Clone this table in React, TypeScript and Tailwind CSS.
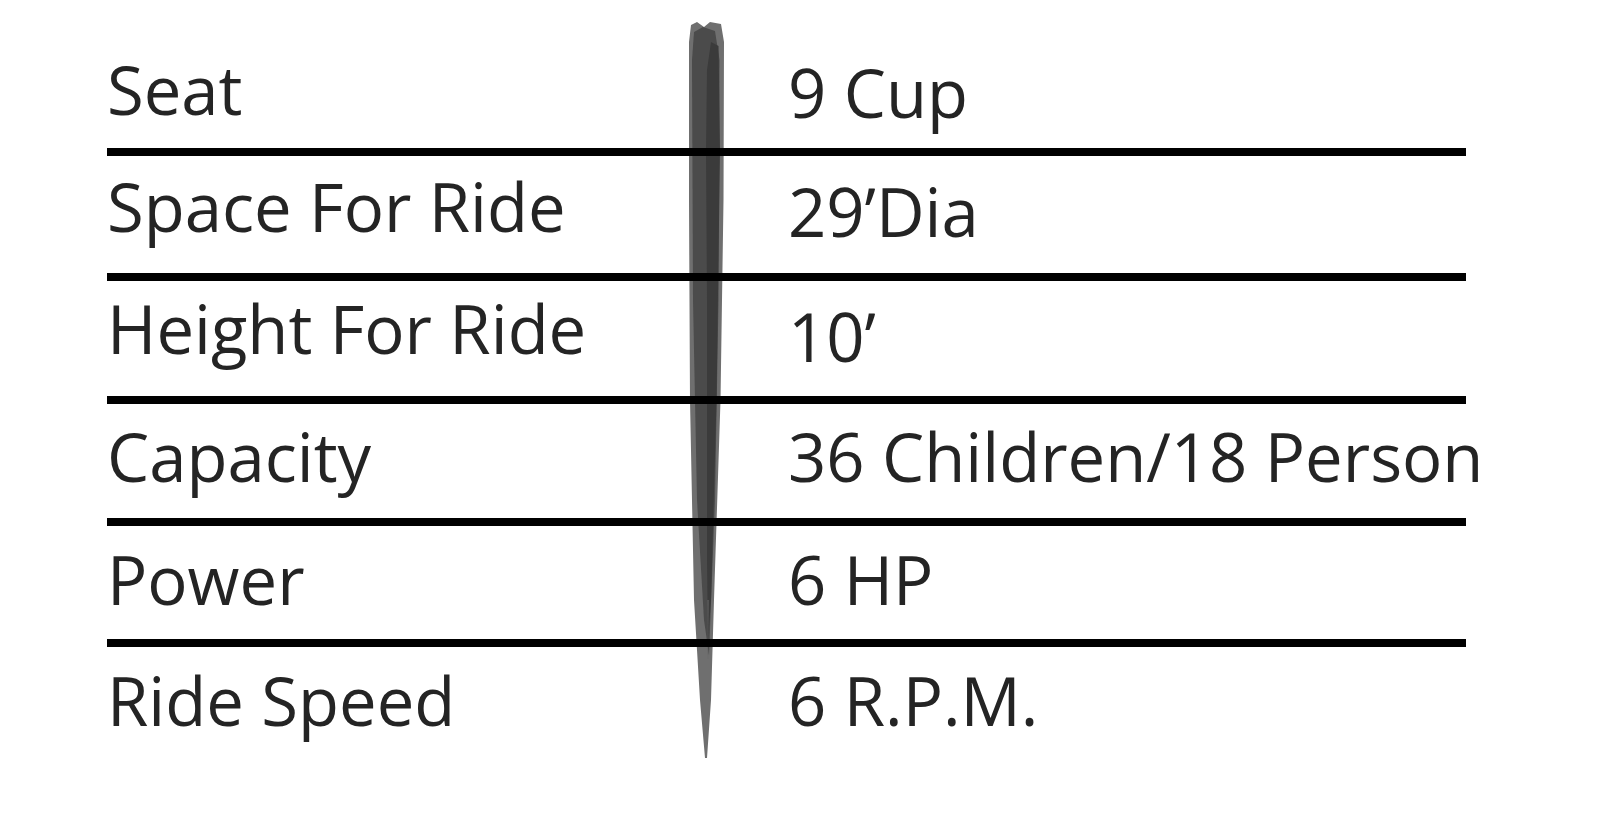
import React from "react";

const rows: { label: string; value: string; h: string; lp: string; rp: string; last?: boolean }[] = [
  { label: "Seat", value: "9 Cup", h: "h-[156px]", lp: "pt-[44px]", rp: "pt-[47px]" },
  { label: "Space For Ride", value: "29’Dia", h: "h-[125px]", lp: "pt-[5px]", rp: "pt-[10px]" },
  { label: "Height For Ride", value: "10’", h: "h-[123px]", lp: "pt-[2px]", rp: "pt-[10px]" },
  { label: "Capacity", value: "36 Children/18 Person", h: "h-[122px]", lp: "pt-[7px]", rp: "pt-[7px]" },
  { label: "Power", value: "6 HP", h: "h-[121px]", lp: "pt-[8px]", rp: "pt-[8px]" },
  { label: "Ride Speed", value: "6 R.P.M.", h: "h-[130px]", lp: "pt-[8px]", rp: "pt-[8px]", last: true },
];

function Divider() {
  return (
    <svg
      className="absolute left-[680px] top-[15px] mix-blend-multiply"
      width="55"
      height="750"
      viewBox="680 15 55 750"
    >
      <path
        d="M691 25 L697 22 L704 27 L710 22 L721 24 L724 42 L723.5 200 L720.5 400 L714 600 L711 700 L707 758 L705 758 L700 700 L694 600 L690 400 L689 200 L689 42 Z"
        fill="#6f6f6f"
      />
      <path
        d="M694 32 L703 27 L715 31 L719.5 60 L718.5 300 L715 500 L709 655 L704 620 L697 500 L693 300 L692 60 Z"
        fill="#4b4b4b"
      />
      <path
        d="M711 42 L718.5 46 L720 150 L716.5 400 L711 600 L708 640 L707 560 L707 300 L706 150 L707 70 Z"
        fill="#3b3b3b"
      />
      <path d="M707 600 L709 600 L708 660 Z" fill="#555555" />
    </svg>
  );
}

export default function App() {
  return (
    <div
      className="relative w-full h-[837px] bg-white overflow-hidden text-[#242424]"
      style={{ fontFamily: "'Open Sans', 'Noto Sans', sans-serif" }}
    >
      <div className="ml-[107px] w-[1359px] flex flex-col">
        {rows.map((r) => (
          <div
            key={r.label}
            className={`flex box-border ${r.h} ${r.last ? "" : "border-b-[8px] border-black"}`}
          >
            <div className={`w-[681px] shrink-0 ${r.lp} text-[67px] leading-[90px] whitespace-nowrap`}>
              {r.label}
            </div>
            <div className={`${r.rp} text-[67px] leading-[90px] whitespace-nowrap`}>{r.value}</div>
          </div>
        ))}
      </div>
      <Divider />
    </div>
  );
}
